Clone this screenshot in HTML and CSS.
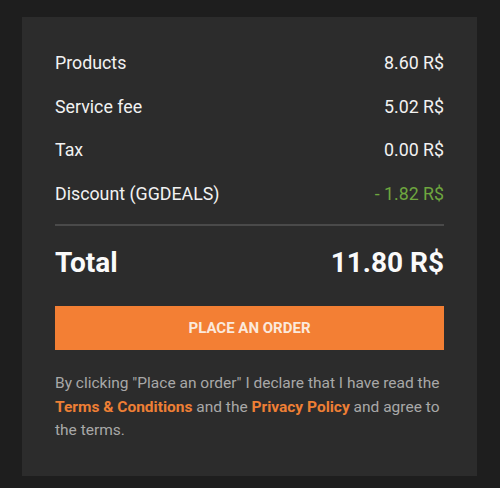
FILE: index.html
```html
<!DOCTYPE html>
<html lang="en">
<head>
  <meta charset="UTF-8" />
  <meta name="viewport" content="width=device-width, initial-scale=1.0"/>
  <title>Order Summary</title>
  <link rel="stylesheet" href="styles.css">
</head>
<body>

  <div class="summary">
    <div class="rows">
      <div class="row">
        <span>Products</span>
        <span>8.60 R$</span>
      </div>
      <div class="row">
        <span>Service fee</span>
        <span>5.02 R$</span>
      </div>
      <div class="row">
        <span>Tax</span>
        <span>0.00 R$</span>
      </div>
      <div class="row">
        <span>Discount (GGDEALS)</span>
        <span class="discount">- 1.82 R$</span>
      </div>
    </div>

    <div class="total">
      <span>Total</span>
      <span>11.80 R$</span>
    </div>

    <button class="order-btn">Place an order</button>

    <p class="terms">
      By clicking "Place an order" I declare that I have read the
      <a href="#">Terms &amp; Conditions</a> and the <a href="#">Privacy Policy</a> and agree to the terms.
    </p>
  </div>

</body>
</html>
```

FILE: styles.css
```css
* {
  margin: 0;
  padding: 0;
  box-sizing: border-box;
}

body {
  background-color: #1e1e1e;
  font-family: Roboto, Arial, sans-serif;
  padding: 17px 23px 12px 22px;
}

.summary {
  background-color: #2c2c2c;
  padding: 24px 33px 33px 33px;
  color: #f2f2f2;
}

.rows {
  display: flex;
  flex-direction: column;
  padding-bottom: 9px;
  border-bottom: 2px solid #4a4a4a;
}

.row {
  display: flex;
  justify-content: space-between;
  font-size: 17.8px;
  line-height: 43.5px;
}

.discount {
  color: #6ea63f;
}

.total {
  display: flex;
  justify-content: space-between;
  font-size: 28px;
  font-weight: bold;
  color: #fafafa;
  margin-top: 17px;
  line-height: 40px;
}

.order-btn {
  display: block;
  width: 100%;
  height: 44px;
  margin-top: 23px;
  background-color: #f37f34;
  color: #fbe9dc;
  border: none;
  font-family: Roboto, Arial, sans-serif;
  font-size: 15px;
  font-weight: bold;
  text-transform: uppercase;
  cursor: pointer;
}

.terms {
  margin-top: 22px;
  font-size: 15.5px;
  line-height: 23.5px;
  color: #a8a8a8;
}

.terms a {
  color: #ee7f35;
  font-weight: bold;
  text-decoration: none;
}
```
